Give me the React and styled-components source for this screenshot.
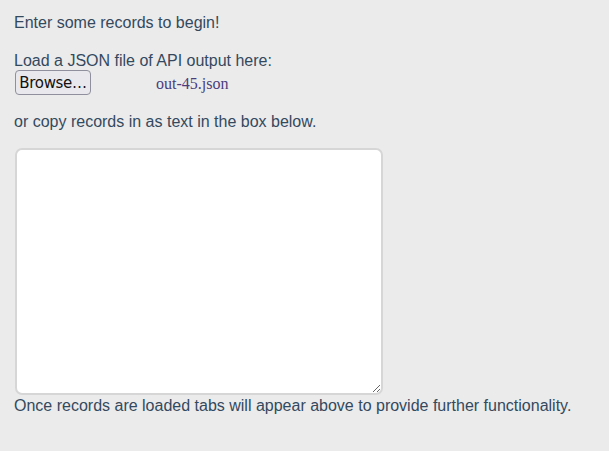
import React from "react";
import styled, { createGlobalStyle } from "styled-components";

const Global = createGlobalStyle`
  html, body { margin: 0; padding: 0; background: #ebebeb; }
  body { font-family: "Liberation Sans", Arial, sans-serif; }
`;

const Page = styled.main`
  display: flex;
  flex-direction: column;
  align-items: flex-start;
  padding: 14px 14px 0 14px;
  height: 451px;
  box-sizing: border-box;
  color: #34495e;
  font-size: 16px;
  line-height: 17px;
`;

const Text = styled.p`
  margin: ${(p) => p.$top || 0}px 0 0 0;
`;

const FileRow = styled.div`
  display: flex;
  align-items: center;
  margin-top: 1px;
  padding-left: 1px;
`;

const FakeButton = styled.button`
  font-family: "DejaVu Sans", sans-serif;
  font-size: 15px;
  letter-spacing: -0.3px;
  color: #111;
  background: #e9e9ed;
  border: 1px solid #8f8f9d;
  border-radius: 4px;
  width: 76px;
  height: 25px;
  padding: 0;
  display: flex;
  align-items: center;
  justify-content: center;
  cursor: pointer;
`;

const FileName = styled.span`
  font-family: "Liberation Serif", "Times New Roman", serif;
  font-size: 16px;
  color: #4a3d7c;
  margin-left: 65px;
  margin-top: 2px;
`;

const Area = styled.textarea`
  margin-top: 18px;
  margin-left: 1px;
  width: 368px;
  height: 247px;
  box-sizing: border-box;
  border: 2px solid #d6d6d6;
  border-radius: 7px;
  background: #fff;
  resize: both;
  outline: none;
  font-family: "Liberation Sans", sans-serif;
  font-size: 15px;
`;

export default function App() {
  return (
    <>
      <Global />
      <Page>
        <Text>Enter some records to begin!</Text>
        <Text $top={21}>Load a JSON file of API output here:</Text>
        <FileRow>
          <FakeButton type="button">Browse…</FakeButton>
          <FileName>out-45.json</FileName>
        </FileRow>
        <Text $top={18}>or copy records in as text in the box below.</Text>
        <Area />
        <Text $top={2}>Once records are loaded tabs will appear above to provide further functionality.</Text>
      </Page>
    </>
  );
}
